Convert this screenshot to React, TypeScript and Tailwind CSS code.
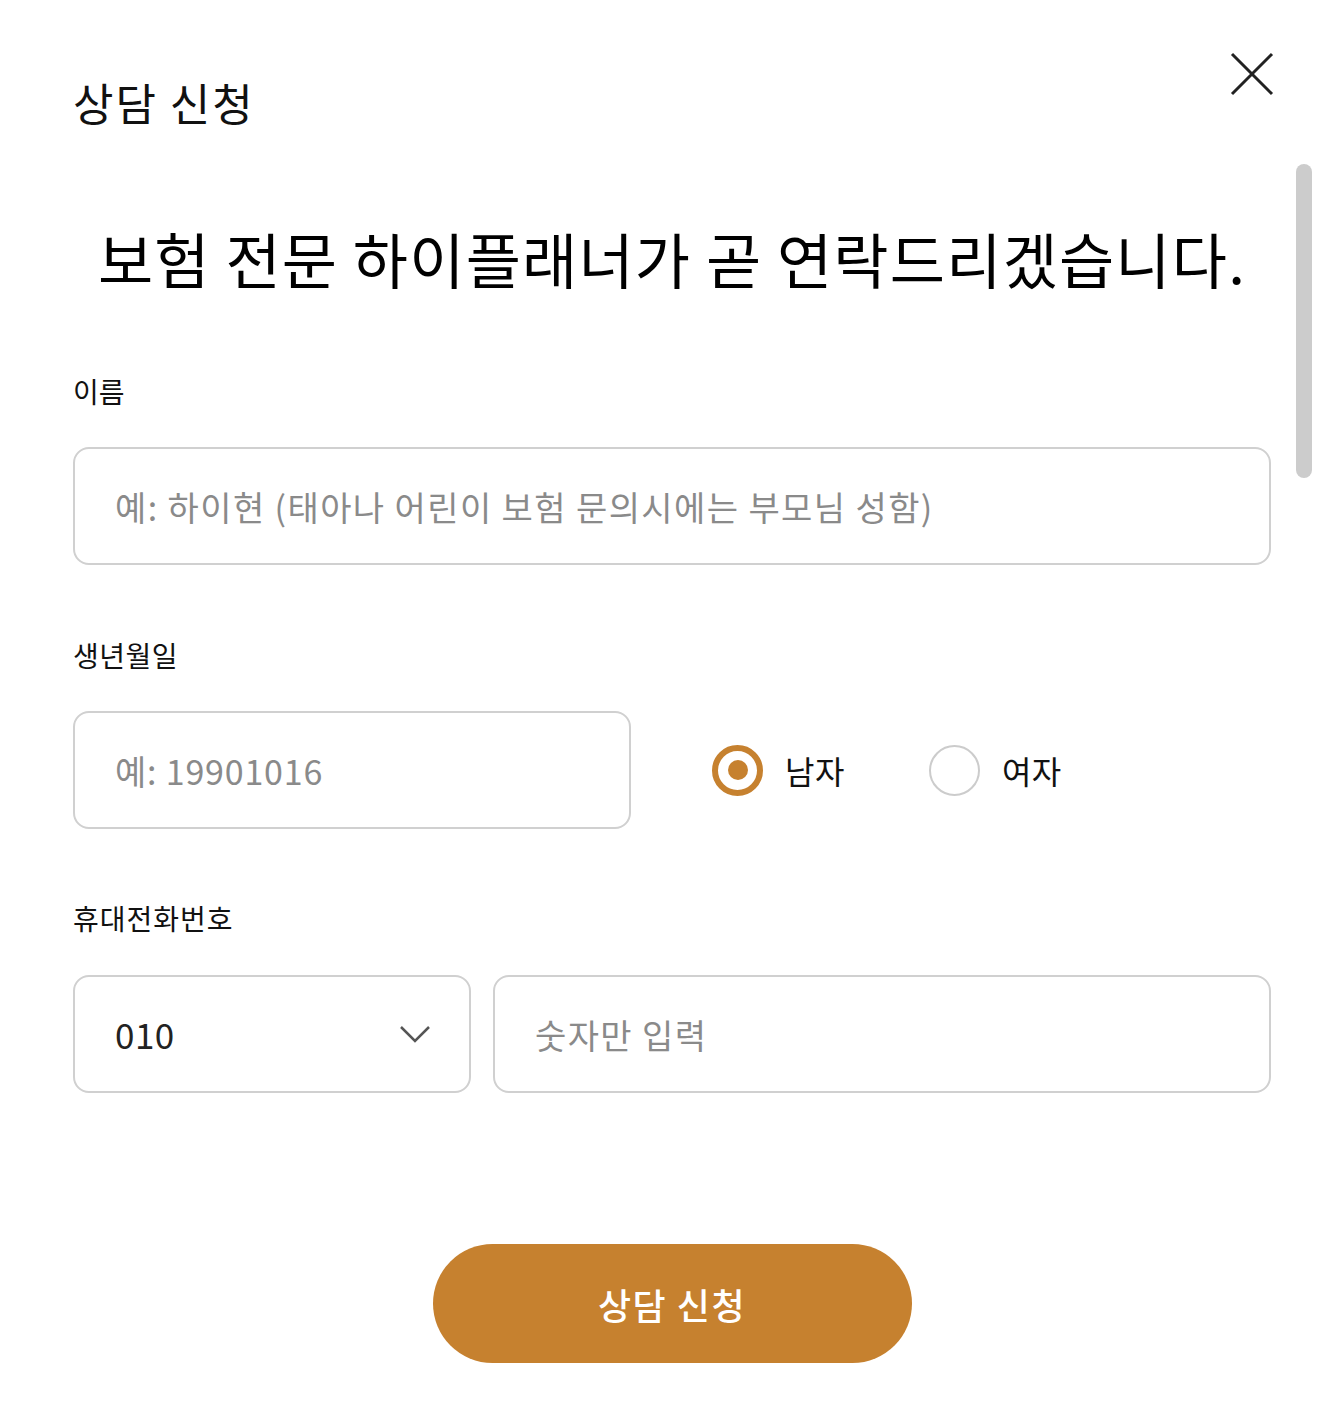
import { useState } from 'react';

const font = { fontFamily: '"Noto Sans CJK KR", "Noto Sans", sans-serif' };

const App = () => {
  const [gender, setGender] = useState<'m' | 'f'>('m');

  return (
    <div className="relative min-h-[1416px] w-full bg-white text-[#111]" style={font}>
      {/* Close */}
      <button className="absolute left-[1230px] top-[52px] h-[44px] w-[44px]" aria-label="닫기">
        <svg viewBox="0 0 44 44" className="h-full w-full">
          <path d="M2 2 L42 42 M42 2 L2 42" stroke="#222" strokeWidth="3" fill="none" />
        </svg>
      </button>

      {/* Scrollbar */}
      <div className="absolute left-[1296px] top-[164px] h-[314px] w-[16px] rounded-full bg-[#cccccc]" />

      <div className="flex flex-col pl-[73px] pr-[67px] pt-[72px]">
        <h1 className="text-[44px] leading-[60px] tracking-[2px] font-normal">상담 신청</h1>

        <h2 className="mt-[86px] text-center text-[60px] leading-[80px] tracking-[1.2px] font-normal text-black">
          보험 전문 하이플래너가 곧 연락드리겠습니다.
        </h2>

        {/* Name */}
        <label className="mt-[73px] text-[28px] leading-[40px] tracking-[0px]">이름</label>
        <input
          className="mt-[36px] h-[118px] w-full rounded-[16px] border-2 border-[#d0d0d0] px-[40px] text-[34px] tracking-[1.4px] outline-none placeholder:text-[#8a8a8a]"
          placeholder="예: 하이현 (태아나 어린이 보험 문의시에는 부모님 성함)"
        />

        {/* Birth */}
        <label className="mt-[70px] text-[28px] leading-[40px] tracking-[0.5px]">생년월일</label>
        <div className="mt-[36px] flex items-center">
          <input
            className="h-[118px] w-[558px] rounded-[16px] border-2 border-[#d0d0d0] px-[40px] text-[34px] tracking-[0.8px] outline-none placeholder:text-[#8a8a8a]"
            placeholder="예: 19901016"
          />
          <div className="ml-[81px] flex items-center">
            <button onClick={() => setGender('m')} className="flex items-center">
              <span
                className={
                  gender === 'm'
                    ? 'flex h-[51px] w-[51px] items-center justify-center rounded-full border-[6px] border-[#c6812f]'
                    : 'flex h-[51px] w-[51px] items-center justify-center rounded-full border-2 border-[#cccccc]'
                }
              >
                {gender === 'm' && <span className="h-[20px] w-[20px] rounded-full bg-[#c6812f]" />}
              </span>
              <span className="ml-[22px] text-[32px] leading-[40px] tracking-[0.5px]">남자</span>
            </button>
            <button onClick={() => setGender('f')} className="ml-[84px] flex items-center">
              <span
                className={
                  gender === 'f'
                    ? 'flex h-[51px] w-[51px] items-center justify-center rounded-full border-[6px] border-[#c6812f]'
                    : 'flex h-[51px] w-[51px] items-center justify-center rounded-full border-2 border-[#cccccc]'
                }
              >
                {gender === 'f' && <span className="h-[20px] w-[20px] rounded-full bg-[#c6812f]" />}
              </span>
              <span className="ml-[22px] text-[32px] leading-[40px] tracking-[0.5px]">여자</span>
            </button>
          </div>
        </div>

        {/* Phone */}
        <label className="mt-[69px] text-[28px] leading-[40px] tracking-[1px]">휴대전화번호</label>
        <div className="mt-[37px] flex gap-[22px]">
          <div className="flex h-[118px] w-[398px] shrink-0 items-center justify-between rounded-[16px] border-2 border-[#d0d0d0] pl-[40px] pr-[38px]">
            <span className="text-[35px] tracking-[0.5px] text-[#222]">010</span>
            <svg width="32" height="20" viewBox="0 0 32 20">
              <path d="M2 3 L16 17 L30 3" stroke="#555" strokeWidth="2.5" fill="none" />
            </svg>
          </div>
          <input
            className="h-[118px] flex-1 rounded-[16px] border-2 border-[#d0d0d0] px-[40px] text-[34px] tracking-[1.4px] outline-none placeholder:text-[#8a8a8a]"
            placeholder="숫자만 입력"
          />
        </div>

        <button className="mx-auto mt-[151px] h-[119px] w-[479px] rounded-full bg-[#c6812f] text-[36px] font-medium tracking-[1.5px] text-white">
          상담 신청
        </button>
      </div>
    </div>
  );
};

export default App;
